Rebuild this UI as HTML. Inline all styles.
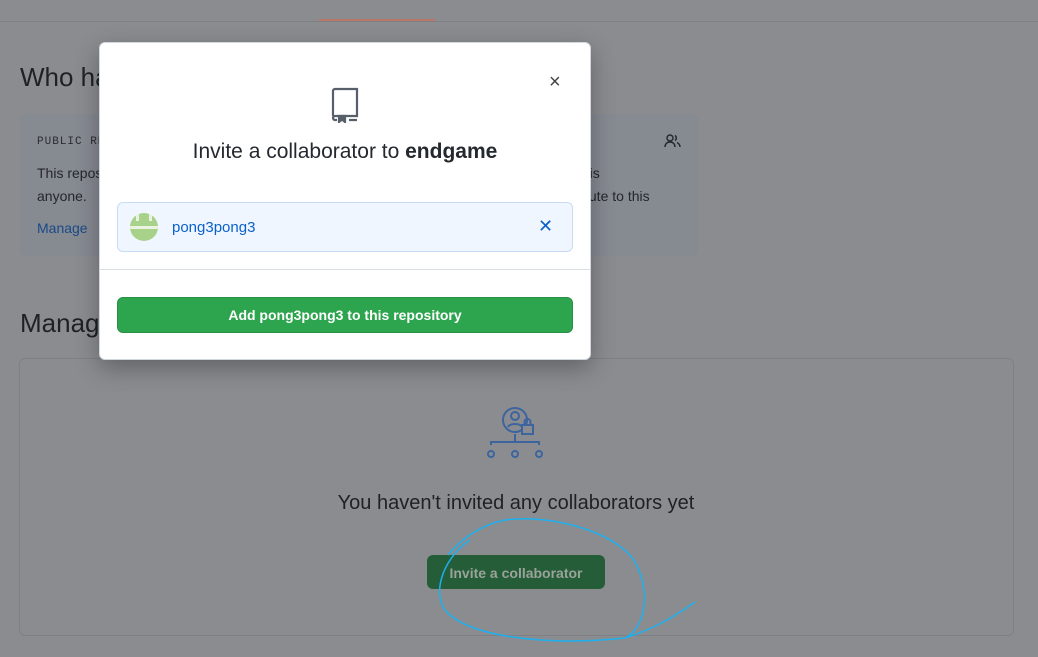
<!DOCTYPE html>
<html><head><style>
body{margin:0;width:1038px;height:657px;overflow:hidden;background:#8b8c8f;font-family:"Liberation Sans",sans-serif;position:relative}
.a{position:absolute}
</style></head><body>
<div class="a" style="left:0;top:0;width:1038px;height:21px;border-bottom:1px solid #7e8084;background:#8b8c8f"></div>
<div class="a" style="left:319px;top:19px;width:116px;height:2px;background:#b8756a"></div>
<div class="a" style="left:20px;top:62px;font-size:26px;color:#1e2125">Who has access</div>
<div class="a" style="left:20px;top:114px;width:678px;height:142px;background:#868a91;border-radius:6px"></div>
<div class="a" style="left:37px;top:136px;font:11px 'Liberation Mono',monospace;color:#2a2d31;letter-spacing:1px">PUBLIC REPOSITORY</div>
<div class="a" style="left:37px;top:162px;font-size:14px;color:#24272b;line-height:23px">This repository is public<br>anyone.</div>
<div class="a" style="left:578px;top:162px;font-size:14px;color:#24272b;line-height:23px">this<br>ibute to this</div>
<div class="a" style="left:37px;top:220px;font-size:14px;color:#1a4a8a">Manage</div>
<svg class="a" style="left:664px;top:133px" width="18" height="16" viewBox="0 0 18 16" fill="none" stroke="#24272b" stroke-width="1.4"><circle cx="6" cy="5" r="3"/><path d="M1 14c0-3 2-5 5-5s5 2 5 5M11 2.5a3 3 0 010 5M13 9.5c2 1 3 2.5 3 4.5"/></svg>
<div class="a" style="left:20px;top:308px;font-size:26px;color:#1e2125">Manage access</div>
<div class="a" style="left:19px;top:358px;width:993px;height:276px;border:1px solid #7d8085;border-radius:6px"></div>
<svg class="a" style="left:486px;top:405px" width="60" height="56" viewBox="0 0 60 56" fill="none" stroke="#3e64a0" stroke-width="2"><circle cx="29" cy="15" r="12"/><circle cx="29" cy="11" r="4"/><path d="M22 22c2-4 12-4 14 0"/><rect x="36" y="20" width="11" height="9" fill="#8b8c8f"/><path d="M38.5 20v-3a3 3 0 016 0v3"/><path d="M29 29v8M5 40v-3h48v3"/><circle cx="5" cy="49" r="3"/><circle cx="29" cy="49" r="3"/><circle cx="53" cy="49" r="3"/></svg>
<div class="a" style="left:0;width:1032px;top:492px;text-align:center;font-size:20px;color:#1e2125">You haven't invited any collaborators yet</div>
<div class="a" style="left:427px;top:555px;width:178px;height:34px;background:#245d37;border-radius:6px;color:#9aa39b;font-size:14px;font-weight:bold;text-align:center;line-height:37px">Invite a collaborator</div>
<svg class="a" style="left:0;top:0" width="1038" height="657" fill="none" stroke="#1cb0ef" stroke-width="1.5"><path d="M470 540C440 560 430 600 450 615C480 640 560 645 625 638C650 625 650 580 630 555C600 525 540 515 505 520C480 525 460 540 448 555M625 638C650 630 670 620 695 602"/></svg>
<div class="a" style="left:99px;top:42px;width:490px;height:316px;background:#fff;border-radius:6px;box-shadow:0 8px 24px rgba(0,0,0,.3);border:1px solid #d0d7de">
 <div class="a" style="left:449px;top:28px;font-size:20px;color:#444">×</div>
 <svg class="a" style="left:229px;top:44px" width="32" height="36" viewBox="0 0 32 36" fill="none" stroke="#57606a" stroke-width="2.2"><path d="M4 29V4a2 2 0 012-2h22v27H6a2 2 0 00-2 2v0a2 2 0 002 2h2M20 33h8"/><path d="M10 29v6l3-2.5 3 2.5v-6z" fill="#57606a"/></svg>
 <div class="a" style="left:0;width:490px;top:97px;text-align:center;font-size:21px;color:#24292f">Invite a collaborator to <b>endgame</b></div>
 <div class="a" style="left:17px;top:159px;width:454px;height:48px;background:#f0f6ff;border:1px solid #c8dbf5;border-radius:6px">
  <div class="a" style="left:12px;top:10px;width:28px;height:28px;border-radius:50%;background:#a8d18a;overflow:hidden"><div class="a" style="left:0;top:13px;width:28px;height:3px;background:#eaf2e0"></div><div class="a" style="left:6px;top:0;width:3px;height:8px;background:#eaf2e0"></div><div class="a" style="left:19px;top:0;width:3px;height:8px;background:#eaf2e0"></div></div>
  <div class="a" style="left:54px;top:16px;font-size:15px;color:#0a61c9">pong3pong3</div>
  <div class="a" style="left:420px;top:13px;font-size:18px;color:#0a61c9">✕</div>
 </div>
 <div class="a" style="left:0;top:226px;width:490px;height:1px;background:#d8dee4"></div>
 <div class="a" style="left:17px;top:254px;width:454px;height:34px;background:#2da44e;border-radius:6px;border:1px solid #2a8f46;color:#fff;font-size:14px;font-weight:bold;text-align:center;line-height:34px">Add pong3pong3 to this repository</div>
</div>
</body></html>
